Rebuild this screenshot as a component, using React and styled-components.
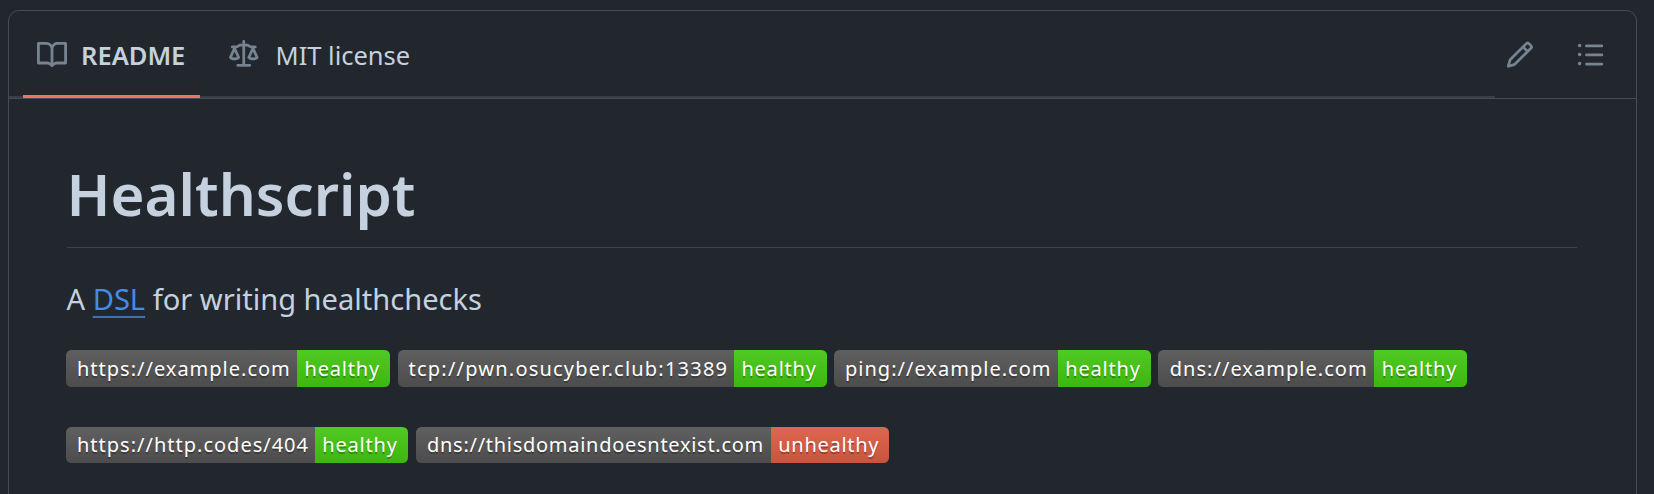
import React from 'react';
import styled, { createGlobalStyle } from 'styled-components';

const GlobalStyle = createGlobalStyle`
  * { box-sizing: border-box; }
  body {
    margin: 0;
    background: #22272e;
    color: #c5d1de;
    font-family: "Noto Sans", sans-serif;
    overflow: hidden;
  }
`;

const Page = styled.main`
  height: 494px;
  padding: 10px 17px 0 8px;
  overflow: hidden;
`;

const Panel = styled.section`
  height: 520px;
  border: 1px solid #444c56;
  border-radius: 11px;
`;

const Header = styled.header`
  display: flex;
  height: 88px;
  border-bottom: 1px solid #444c56;
`;

const Tabs = styled.nav`
  display: flex;
  flex: none;
  width: 1486px;
  padding-left: 14px;
  border-bottom: 2px solid #373e47;
`;

const Tab = styled.a`
  display: flex;
  align-items: center;
  height: 87px;
  padding: 4px 15px 0 14px;
  margin-right: 15px;
  width: ${(p) => p.$width}px;
  border-bottom: 3px solid ${(p) => (p.$active ? '#ec775c' : 'transparent')};
  font-size: 25.5px;
  font-weight: ${(p) => (p.$active ? 600 : 400)};
  line-height: 36px;
  white-space: nowrap;

  svg { margin-right: ${(p) => p.$gap}px; }
`;

const Actions = styled.div`
  display: flex;
  flex: 1;
  gap: 41px;
  padding: 29px 0 0 10.2px;
`;

const Icon = styled.svg`
  display: block;
  flex: none;
  width: ${(p) => p.$size || 29.5}px;
  height: ${(p) => p.$size || 29.5}px;
  fill: #768390;
`;

const Article = styled.article`
  padding: 58px 59px 0 58px;
`;

const Title = styled.h1`
  height: 91px;
  margin: 0;
  border-bottom: 1px solid #3d444d;
  font-size: 58.2px;
  font-weight: 600;
  line-height: 74px;
  text-indent: -0.5px;
`;

const Intro = styled.p`
  margin: 29px 0 0 -0.5px;
  font-size: 29.08px;
  line-height: 44px;
`;

const Link = styled.a`
  color: #478be6;
  text-decoration: underline;
  text-decoration-thickness: 2px;
  text-underline-offset: 6px;
  text-decoration-color: #3b71b9;
`;

const BadgeRow = styled.div`
  display: flex;
  height: 37px;
  margin: ${(p) => p.$top}px 0 0 -1px;
  gap: ${(p) => p.$gap}px;
`;

const Badge = styled.div`
  display: flex;
  flex: none;
  height: ${(p) => p.$height}px;
  overflow: hidden;
  border-radius: 5.5px;
  color: #fff;
  font-size: 20px;
  line-height: ${(p) => p.$height}px;
  white-space: nowrap;
  text-shadow: 0 2px 0 rgba(1, 1, 1, 0.3);
`;

const Part = styled.span`
  width: ${(p) => p.$width}px;
  padding-left: ${(p) => p.$pad}px;
  letter-spacing: ${(p) => p.$spacing}px;
  background: linear-gradient(rgba(187, 187, 187, 0.1), rgba(0, 0, 0, 0.1)) ${(p) => p.$color};
`;

const icons = {
  book: 'M0 1.75A.75.75 0 0 1 .75 1h4.253c1.227 0 2.317.59 3 1.501A3.743 3.743 0 0 1 11.006 1h4.245a.75.75 0 0 1 .75.75v10.5a.75.75 0 0 1-.75.75h-4.507a2.25 2.25 0 0 0-1.591.659l-.622.621a.75.75 0 0 1-1.06 0l-.622-.621A2.25 2.25 0 0 0 5.258 13H.75a.75.75 0 0 1-.75-.75Zm7.251 10.324.004-5.073-.002-2.253A2.25 2.25 0 0 0 5.003 2.5H1.5v9h3.757a3.75 3.75 0 0 1 1.994.574ZM8.755 4.75l-.004 7.322a3.752 3.752 0 0 1 1.992-.572H14.5v-9h-3.495a2.25 2.25 0 0 0-2.25 2.25Z',
  law: 'M8.75.75V2h.985c.304 0 .603.08.867.231l1.29.736c.038.022.08.033.124.033h2.234a.75.75 0 0 1 0 1.5h-.427l2.111 4.692a.75.75 0 0 1-.154.838l-.53-.53.529.531-.001.002-.002.002-.006.006-.006.005-.01.01-.045.04c-.21.176-.441.327-.686.45C14.556 10.78 13.88 11 13 11a4.498 4.498 0 0 1-2.023-.454 3.544 3.544 0 0 1-.686-.45l-.045-.04-.016-.015-.006-.006-.004-.004v-.001a.75.75 0 0 1-.154-.838L12.178 4.5h-.162c-.305 0-.604-.079-.868-.231l-1.29-.736a.245.245 0 0 0-.124-.033H8.75V13h2.5a.75.75 0 0 1 0 1.5h-6.5a.75.75 0 0 1 0-1.5h2.5V3.5h-.984a.245.245 0 0 0-.124.033l-1.289.737c-.265.15-.564.23-.869.23h-.162l2.112 4.692a.75.75 0 0 1-.154.838l-.53-.53.529.531-.001.002-.002.002-.006.006-.016.015-.045.04c-.21.176-.441.327-.686.45C4.556 10.78 3.88 11 3 11a4.498 4.498 0 0 1-2.023-.454 3.544 3.544 0 0 1-.686-.45l-.045-.04-.016-.015-.006-.006-.004-.004v-.001a.75.75 0 0 1-.154-.838L2.178 4.5H1.75a.75.75 0 0 1 0-1.5h2.234a.249.249 0 0 0 .125-.033l1.288-.737c.265-.15.564-.23.869-.23h.984V.75a.75.75 0 0 1 1.5 0Zm2.945 8.477c.285.135.718.273 1.305.273s1.02-.138 1.305-.273L13 6.327Zm-10 0c.285.135.718.273 1.305.273s1.02-.138 1.305-.273L3 6.327Z',
  pencil: 'M11.013 1.427a1.75 1.75 0 0 1 2.474 0l1.086 1.086a1.75 1.75 0 0 1 0 2.474l-8.61 8.61c-.21.21-.47.364-.756.445l-3.251.93a.75.75 0 0 1-.927-.928l.929-3.25c.081-.286.235-.547.445-.758l8.61-8.61Zm.176 4.823L9.75 4.81l-6.286 6.287a.253.253 0 0 0-.064.108l-.558 1.953 1.953-.558a.253.253 0 0 0 .108-.064Zm1.238-3.763a.25.25 0 0 0-.354 0L10.811 3.75l1.439 1.44 1.263-1.263a.25.25 0 0 0 0-.354Z',
  list: 'M5.75 2.5h8.5a.75.75 0 0 1 0 1.5h-8.5a.75.75 0 0 1 0-1.5Zm0 5h8.5a.75.75 0 0 1 0 1.5h-8.5a.75.75 0 0 1 0-1.5Zm0 5h8.5a.75.75 0 0 1 0 1.5h-8.5a.75.75 0 0 1 0-1.5ZM2 14a1 1 0 1 1 0-2 1 1 0 0 1 0 2Zm1-6a1 1 0 1 1-2 0 1 1 0 0 1 2 0ZM2 4a1 1 0 1 1 0-2 1 1 0 0 1 0 2Z',
};

const Octicon = ({ name, size }) => (
  <Icon viewBox="0 0 16 16" $size={size} aria-hidden="true">
    <path d={icons[name]} />
  </Icon>
);

const rows = [
  {
    top: 29, gap: 7.4, height: 37,
    badges: [
      { label: 'https://example.com', width: 231.2, pad: 11, spacing: 1, status: 'healthy', statusWidth: 93 },
      { label: 'tcp://pwn.osucyber.club:13389', width: 336.5, pad: 11, spacing: 1.21, status: 'healthy', statusWidth: 92.5 },
      { label: 'ping://example.com', width: 224, pad: 11, spacing: 1.02, status: 'healthy', statusWidth: 92.9 },
      { label: 'dns://example.com', width: 216.2, pad: 11.5, spacing: 1.03, status: 'healthy', statusWidth: 92.5 },
    ],
  },
  {
    top: 40, gap: 8, height: 36,
    badges: [
      { label: 'https://http.codes/404', width: 249, pad: 11, spacing: 1, status: 'healthy', statusWidth: 93 },
      { label: 'dns://thisdomaindoesntexist.com', width: 355, pad: 11, spacing: 0.72, status: 'unhealthy', statusWidth: 118 },
    ],
  },
];

const StatusBadge = ({ badge, height }) => (
  <Badge $height={height}>
    <Part $width={badge.width} $pad={badge.pad} $spacing={badge.spacing} $color="#555">{badge.label}</Part>
    <Part
      $width={badge.statusWidth}
      $pad={7.3}
      $spacing={badge.status === 'healthy' ? 0.8 : 0.7}
      $color={badge.status === 'healthy' ? '#4c1' : '#e05d44'}
    >
      {badge.status}
    </Part>
  </Badge>
);

export default function App() {
  return (
    <Page>
      <GlobalStyle />
      <Panel>
        <Header>
          <Tabs>
            <Tab $active $width={177} $gap={14}><Octicon name="book" size={30} />README</Tab>
            <Tab $width={214} $gap={17}><Octicon name="law" />MIT license</Tab>
          </Tabs>
          <Actions>
            <Octicon name="pencil" />
            <Octicon name="list" size={29} />
          </Actions>
        </Header>
        <Article>
          <Title>Healthscript</Title>
          <Intro>A <Link>DSL</Link> for writing healthchecks</Intro>
          {rows.map((row) => (
            <BadgeRow key={row.top} $top={row.top} $gap={row.gap}>
              {row.badges.map((badge) => (
                <StatusBadge key={badge.label} badge={badge} height={row.height} />
              ))}
            </BadgeRow>
          ))}
        </Article>
      </Panel>
    </Page>
  );
}
